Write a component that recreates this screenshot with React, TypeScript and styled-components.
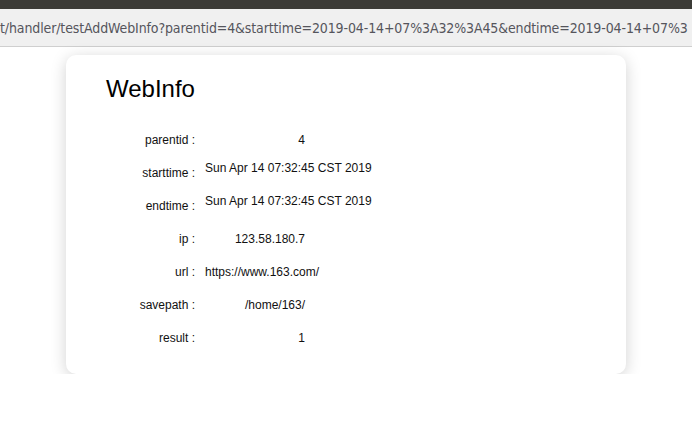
import styled, { createGlobalStyle } from 'styled-components';

const GlobalStyle = createGlobalStyle`
  html, body {
    margin: 0;
    padding: 0;
    background: #ffffff;
  }
  body {
    font-family: "Liberation Sans", Arial, sans-serif;
    overflow: hidden;
  }
`;

const TitleBar = styled.div`
  height: 9px;
  background: #3c3b37;
`;

const AddressBar = styled.div`
  height: 38px;
  background: #f0f0f0;
  border-bottom: 1px solid #cfcfcf;
  display: flex;
  align-items: center;
  overflow: hidden;
  white-space: nowrap;
  font-family: "DejaVu Sans Condensed", "Liberation Sans", sans-serif;
  font-size: 14px;
  letter-spacing: -0.12px;
  color: #55555c;
  padding-top: 1px;
  box-sizing: border-box;
`;

const Page = styled.div`
  padding: 8px 0 0 66px;
`;

const Card = styled.section`
  width: 560px;
  height: 319px;
  box-sizing: border-box;
  padding: 20px 0 0 40px;
  background: #fff;
  border-radius: 10px;
  box-shadow: 0 3px 16px rgba(0, 0, 0, 0.18);
`;

const Title = styled.h1`
  margin: 0 0 20px;
  font-size: 24px;
  font-weight: normal;
  color: #000;
  line-height: 28px;
`;

const Table = styled.div`
  display: flex;
  flex-direction: column;
  margin-left: -40px;
`;

const Row = styled.div`
  display: grid;
  grid-template-columns: 129px auto;
  column-gap: 10px;
  align-items: center;
  height: 33px;
  font-size: 12px;
  color: #111;
`;

const Label = styled.span`
  text-align: right;
`;

const Value = styled.span<{ $raised?: boolean }>`
  justify-self: start;
  min-width: 100px;
  text-align: right;
  margin-bottom: ${(p) => (p.$raised ? '10px' : '0')};
`;

const rows = [
  { label: 'parentid', value: '4' },
  { label: 'starttime', value: 'Sun Apr 14 07:32:45 CST 2019', raised: true },
  { label: 'endtime', value: 'Sun Apr 14 07:32:45 CST 2019', raised: true },
  { label: 'ip', value: '123.58.180.7' },
  { label: 'url', value: 'https://www.163.com/' },
  { label: 'savepath', value: '/home/163/' },
  { label: 'result', value: '1' },
];

export default function App() {
  return (
    <>
      <GlobalStyle />
      <TitleBar />
      <AddressBar>
        t/handler/testAddWebInfo?parentid=4&amp;starttime=2019-04-14+07%3A32%3A45&amp;endtime=2019-04-14+07%3
      </AddressBar>
      <Page>
        <Card>
          <Title>WebInfo</Title>
          <Table>
            {rows.map((r) => (
              <Row key={r.label}>
                <Label>{r.label} :</Label>
                <Value $raised={r.raised}>{r.value}</Value>
              </Row>
            ))}
          </Table>
        </Card>
      </Page>
    </>
  );
}
